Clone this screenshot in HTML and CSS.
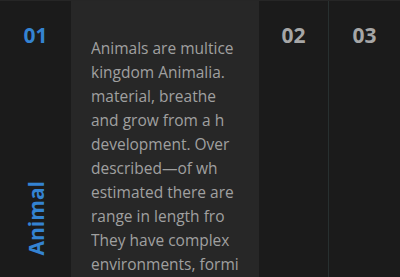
FILE: index.html
```html
<!DOCTYPE html>
<html>
<head>
  <meta charset="utf-8">
  <title>Accordion</title>
  <link rel="stylesheet" href="styles.css">
</head>
<body>
  <div class="accordion">
    <div class="panel active">
      <div class="tab">
        <span class="num">01</span>
        <span class="title">Animal</span>
      </div>
      <div class="content">
        <div class="text">
          <span class="line">Animals are multice</span>
          <span class="line">kingdom Animalia.</span>
          <span class="line">material, breathe</span>
          <span class="line">and grow from a h</span>
          <span class="line">development. Over</span>
          <span class="line">described—of wh</span>
          <span class="line">estimated there are</span>
          <span class="line">range in length fro</span>
          <span class="line">They have complex</span>
          <span class="line">environments, formi</span>
        </div>
      </div>
    </div>
    <div class="panel bordered">
      <div class="tab">
        <span class="num">02</span>
      </div>
    </div>
    <div class="panel">
      <div class="tab">
        <span class="num">03</span>
      </div>
    </div>
  </div>
</body>
</html>
```

FILE: styles.css
```css
* {
  margin: 0;
  padding: 0;
  box-sizing: border-box;
}

body {
  font-family: 'Open Sans', 'Noto Sans', sans-serif;
  background: #1b1b1b;
  width: 400px;
  height: 277px;
  overflow: hidden;
}

.accordion {
  display: flex;
  height: 277px;
  border-top: 1px solid #262626;
}

.panel {
  display: flex;
  background: #1b1b1b;
}

.panel.bordered {
  border-right: 1px solid #283030;
}

.tab {
  width: 71px;
  display: flex;
  flex-direction: column;
  align-items: center;
  justify-content: space-between;
  padding: 21px 0 22px;
}

.panel.bordered .tab {
  width: 69px;
}

.num {
  font-size: 21px;
  font-weight: 700;
  color: #a6a6a6;
  line-height: 26px;
}

.active .num,
.title {
  color: #3483d2;
}

.title {
  font-size: 21px;
  font-weight: 700;
  writing-mode: vertical-rl;
  transform: rotate(180deg);
  line-height: 26px;
}

.content {
  width: 188px;
  background: #272727;
  padding: 35px 0 0 20px;
}

.text {
  display: flex;
  flex-direction: column;
  overflow: hidden;
}

.line {
  white-space: nowrap;
  font-size: 15.5px;
  line-height: 24px;
  color: #a0a0a0;
}
```
